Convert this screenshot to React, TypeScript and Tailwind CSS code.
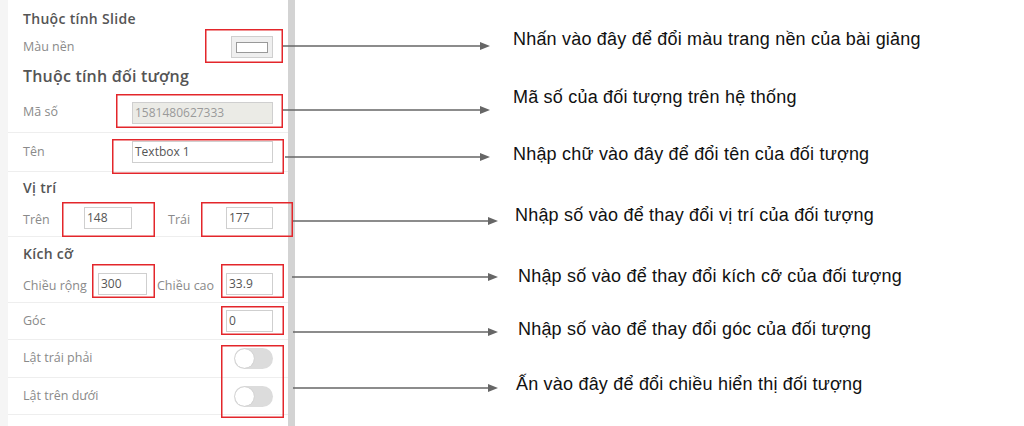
import React from "react";

const panelFont = { fontFamily: '"Open Sans", "Noto Sans", sans-serif' };
const noteFont = { fontFamily: '"Liberation Sans", Arial, sans-serif' };

function Input({ value, w, disabled }: { value: string; w: string; disabled?: boolean }) {
  return (
    <div
      className={`${w} h-[22px] border border-[#cfcfcf] flex items-center px-[2px] text-[12px] leading-none ${
        disabled ? "bg-[#ebebe6] text-[#9a9a9a]" : "bg-white text-[#555]"
      }`}
    >
      {value}
    </div>
  );
}

function Toggle() {
  return (
    <div className="w-[39px] h-[21px] rounded-full bg-[#dcdcdc] flex items-center px-[1px]">
      <div className="w-[19px] h-[19px] rounded-full bg-white shadow-[0_0_1px_rgba(0,0,0,0.25)]" />
    </div>
  );
}

const Label = ({ children }: { children: React.ReactNode }) => (
  <span className="text-[12.5px] text-[#8a8a8a] whitespace-nowrap">{children}</span>
);

const Heading = ({ children, big }: { children: React.ReactNode; big?: boolean }) => (
  <span
    className={`${big ? "text-[16px] tracking-[0.2px]" : "text-[14px] tracking-[0.3px]"} font-semibold text-[#555] whitespace-nowrap`}
  >
    {children}
  </span>
);

const notes: { text: string; mt: string; ml: string }[] = [
  { text: "Nhấn vào đây để đổi màu trang nền của bài giảng", mt: "mt-[28px]", ml: "ml-[218px]" },
  { text: "Mã số của đối tượng trên hệ thống", mt: "mt-[36px]", ml: "ml-[218px]" },
  { text: "Nhập chữ vào đây để đổi tên của đối tượng", mt: "mt-[35px]", ml: "ml-[218px]" },
  { text: "Nhập số vào để thay đổi vị trí của đối tượng", mt: "mt-[39px]", ml: "ml-[220px]" },
  { text: "Nhập số vào để thay đổi kích cỡ của đối tượng", mt: "mt-[39px]", ml: "ml-[223px]" },
  { text: "Nhập số vào để thay đổi góc của đối tượng", mt: "mt-[31px]", ml: "ml-[223px]" },
  { text: "Ấn vào đây để đổi chiều hiển thị đối tượng", mt: "mt-[33px]", ml: "ml-[221px]" },
];

const boxes = [
  [205, 29, 283, 63],
  [116, 94, 283, 128],
  [112, 139, 284, 174],
  [62, 202, 155, 237],
  [201, 202, 293, 237],
  [92, 264, 155, 298],
  [221, 264, 284, 298],
  [221, 306, 284, 335],
  [221, 345, 284, 418],
];

const arrows = [
  [283, 490, 46],
  [283, 490, 110],
  [285, 490, 157],
  [293, 498, 221],
  [292, 498, 277],
  [293, 498, 332],
  [293, 498, 388],
];

export default function App() {
  return (
    <div className="relative w-[1024px] h-[426px] bg-white overflow-hidden flex">
      {/* Left property panel */}
      <div className="w-[288px] h-full flex" style={panelFont}>
        <div className="w-[8px] h-full bg-[#f5f5f5]" />
        <div className="flex-1 flex flex-col pl-[15px] pr-[15px]">
          <div className="h-[36px] flex items-center">
            <Heading>Thuộc tính Slide</Heading>
          </div>
          <div className="h-[22px] flex items-center justify-between">
            <Label>Màu nền</Label>
            <div className="w-[42px] h-[22px] bg-[#efefef] border border-[#cfcfcf] flex items-center justify-center">
              <div className="w-[32px] h-[11px] bg-white border-[1.5px] border-[#999]" />
            </div>
          </div>
          <div className="h-[35px] flex items-center">
            <Heading big>Thuộc tính đối tượng</Heading>
          </div>
          <div className="h-[40px] -ml-[15px] pl-[15px] -mr-[15px] pr-[15px] border-b border-[#eeeeee] flex items-center justify-between">
            <Label>Mã số</Label>
            <Input value="1581480627333" w="w-[141px]" disabled />
          </div>
          <div className="h-[39px] -ml-[15px] pl-[15px] -mr-[15px] pr-[15px] border-b border-[#eeeeee] flex items-center justify-between">
            <Label>Tên</Label>
            <Input value="Textbox 1" w="w-[141px]" />
          </div>
          <div className="h-[28px] flex items-center pt-[2px]">
            <Heading>Vị trí</Heading>
          </div>
          <div className="h-[37px] -ml-[15px] pl-[15px] -mr-[15px] pr-[15px] border-b border-[#eeeeee] flex items-center">
            <div className="w-[61px]">
              <Label>Trên</Label>
            </div>
            <Input value="148" w="w-[48px]" />
            <div className="ml-[36px] flex-1">
              <Label>Trái</Label>
            </div>
            <Input value="177" w="w-[47px]" />
          </div>
          <div className="h-[33px] flex items-center">
            <Heading>Kích cỡ</Heading>
          </div>
          <div className="h-[33px] pb-[5px] -ml-[15px] pl-[15px] -mr-[15px] pr-[15px] border-b border-[#eeeeee] flex items-center">
            <div className="w-[75px]">
              <Label>Chiều rộng</Label>
            </div>
            <Input value="300" w="w-[49px]" />
            <div className="ml-[10px] flex-1">
              <Label>Chiều cao</Label>
            </div>
            <Input value="33.9" w="w-[47px]" />
          </div>
          <div className="h-[37px] -ml-[15px] pl-[15px] -mr-[15px] pr-[15px] border-b border-[#eeeeee] flex items-center justify-between">
            <Label>Góc</Label>
            <Input value="0" w="w-[47px]" />
          </div>
          <div className="h-[38px] -ml-[15px] pl-[15px] -mr-[15px] pr-[15px] border-b border-[#eeeeee] flex items-center justify-between">
            <Label>Lật trái phải</Label>
            <Toggle />
          </div>
          <div className="h-[37px] -ml-[15px] pl-[15px] -mr-[15px] pr-[15px] border-b border-[#eeeeee] flex items-center justify-between">
            <Label>Lật trên dưới</Label>
            <Toggle />
          </div>
        </div>
      </div>

      {/* Scrollbar */}
      <div className="w-[7px] h-full bg-[#d3d3d3]" />

      {/* Notes column */}
      <div className="flex-1 flex flex-col" style={noteFont}>
        {notes.map((n, i) => (
          <div
            key={i}
            className={`${n.mt} ${n.ml} h-[22px] leading-[22px] text-[18px] tracking-[0.2px] text-[#111] whitespace-nowrap`}
          >
            {n.text}
          </div>
        ))}
      </div>

      {/* Annotation overlay: red boxes and arrows */}
      <svg
        className="absolute left-0 top-0 pointer-events-none"
        width="1024"
        height="426"
        viewBox="0 0 1024 426"
      >
        {boxes.map(([x1, y1, x2, y2], i) => (
          <rect
            key={i}
            x={x1 + 0.75}
            y={y1 + 0.75}
            width={x2 - x1 - 1.5}
            height={y2 - y1 - 1.5}
            fill="none"
            stroke="#e3262b"
            strokeWidth="1.5"
          />
        ))}
        {arrows.map(([x1, x2, y], i) => (
          <g key={i}>
            <line x1={x1} y1={y} x2={x2 - 8} y2={y} stroke="#666" strokeWidth="1.5" />
            <polygon points={`${x2},${y} ${x2 - 10},${y - 4} ${x2 - 10},${y + 4}`} fill="#666" />
          </g>
        ))}
      </svg>
    </div>
  );
}
